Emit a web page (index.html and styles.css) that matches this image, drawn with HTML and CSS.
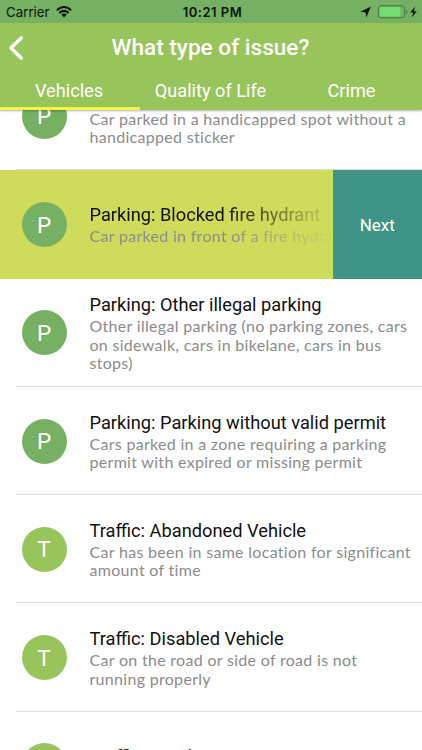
FILE: index.html
```
<!DOCTYPE html>
<html lang="en">
<head>
<meta charset="utf-8">
<title>What type of issue?</title>
<link rel="stylesheet" href="styles.css">
</head>
<body>
<div class="screen">
  <header class="header">
    <div class="status">
      <div class="status-side">
        <span class="carrier">Carrier</span>
        <svg class="wifi" width="16" height="12" viewBox="0 0 16 12"><g fill="none" stroke="#0b160a" stroke-width="2"><path d="M.9 4.2Q8-2.2 15.1 4.2"/><path d="M3.4 7Q8 2.8 12.6 7"/></g><path d="M5.3 8.6Q8 6.6 10.7 8.6L8 11.5z" fill="#0b160a"/></svg>
      </div>
      <span class="clock">10:21 PM</span>
      <div class="status-side status-end">
        <svg width="60" height="14" viewBox="0 0 60 14"><path d="M11 1.6L6.3 12.4L5.7 7.4L.4 6.8z" fill="#0b160a"/><rect x="18.5" y=".8" width="26" height="12" rx="2.5" fill="none" stroke="#42783c"/><rect x="19.7" y="2" width="20.5" height="9.6" rx="1.2" fill="#75da72"/><path d="M46 5v4q1.5-.5 1.5-2t-1.5-2z" fill="#42783c"/><path d="M55 1.6L50.3 7.6h2.9L51.8 12.6l4.9-6.4h-2.9z" fill="#0b160a"/></svg>
      </div>
    </div>
    <div class="bar">
      <svg class="back" width="14" height="24" viewBox="0 0 14 24"><path d="M12.2 2L2 12L12.2 22" fill="none" stroke="#fff" stroke-width="3.6" stroke-linecap="round" stroke-linejoin="round"/></svg>
      <h1 class="heading">What type of issue?</h1>
    </div>
    <nav class="tabs">
      <a class="tab active">Vehicles</a>
      <a class="tab">Quality of Life</a>
      <a class="tab">Crime</a>
    </nav>
  </header>
  <main class="list">
    <section class="row">
      <div class="avatar">P</div>
      <div class="body scrolled"><p class="desc"><span>Car parked in a handicapped spot without a</span><span>handicapped sticker</span></p></div>
    </section>
    <section class="row selected">
      <div class="avatar">P</div>
      <div class="body"><h2 class="title">Parking: Blocked fire hydrant</h2><p class="desc"><span>Car parked in front of a fire hydrant</span></p></div>
      <button class="next">Next</button>
    </section>
    <section class="row">
      <div class="avatar">P</div>
      <div class="body"><h2 class="title">Parking: Other illegal parking</h2><p class="desc"><span>Other illegal parking (no parking zones, cars</span><span>on sidewalk, cars in bikelane, cars in bus</span><span>stops)</span></p></div>
    </section>
    <section class="row">
      <div class="avatar">P</div>
      <div class="body"><h2 class="title">Parking: Parking without valid permit</h2><p class="desc"><span>Cars parked in a zone requiring a parking</span><span>permit with expired or missing permit</span></p></div>
    </section>
    <section class="row traffic">
      <div class="avatar">T</div>
      <div class="body"><h2 class="title">Traffic: Abandoned Vehicle</h2><p class="desc"><span>Car has been in same location for significant</span><span>amount of time</span></p></div>
    </section>
    <section class="row traffic">
      <div class="avatar">T</div>
      <div class="body"><h2 class="title">Traffic: Disabled Vehicle</h2><p class="desc"><span>Car on the road or side of road is not</span><span>running properly</span></p></div>
    </section>
    <section class="row traffic">
      <div class="avatar"></div>
      <div class="body"><h2 class="title">Traffic: Drunk Driver</h2><p class="desc line"></p></div>
    </section>
  </main>
</div>
</body>
</html>
```
FILE: styles.css
```
* { box-sizing: border-box; }
body { margin: 0; background: #fff; font-family: Roboto, sans-serif; }
h1, h2, p { margin: 0; font-weight: 400; }
.screen { width: 422px; height: 750px; overflow: hidden; display: flex; flex-direction: column; }
.header { position: relative; z-index: 2; flex: none; height: 110px; background: #98c45c; color: #fff; box-shadow: 0 1px 2px rgba(0,0,0,.3); }
.status { height: 23px; background: #76b063; color: #0b160a; display: flex; align-items: center; padding: 1px 2px 0 6px; font: 13.3px/20px Inter, sans-serif; }
.status-side { flex: 1; display: flex; align-items: center; gap: 6px; }
.status-end { justify-content: flex-end; }
.clock { font-weight: 600; font-size: 13px; letter-spacing: .5px; margin-right: 1px; }
.bar { height: 49px; display: flex; align-items: center; padding: 1px 9px 0; }
.heading { flex: 1; padding-right: 15px; text-align: center; font-size: 22.6px; line-height: 26px; font-weight: 500; }
.tabs { height: 38px; display: grid; grid-template-columns: 140px 141px 141px; }
.tab { display: flex; align-items: center; justify-content: center; padding-top: 1px; font-size: 18.2px; border-bottom: 3px solid transparent; }
.active { border-bottom-color: #f5f63e; padding-right: 2px; }
.list { flex: 1; overflow: hidden; }
.row { height: 108.25px; display: flex; align-items: center; padding-left: 21.5px; background: linear-gradient(#dedede, #dedede) 16px 100% / 100% 1px no-repeat; }
.row:first-child { height: 60.4px; }
.row:first-child .avatar { margin-top: -48px; }
.avatar { flex: none; width: 45px; height: 45px; border-radius: 50%; background: #76b063; color: #fff; display: flex; align-items: center; justify-content: center; font-size: 22.5px; font-weight: 400; }
.traffic .avatar { background: #98c45c; }
.body { flex: 1; min-width: 0; padding-left: 23px; }
.scrolled { align-self: flex-start; }
.title { font-size: 18.25px; line-height: 23px; padding-bottom: 1px; color: #111; white-space: nowrap; }
.desc { font: 400 16px/18.2px Lato, sans-serif; letter-spacing: .3px; color: #8c8c8c; white-space: nowrap; }
.line { height: 18.2px; }
.desc span { display: block; }
.selected { background: #cfdb5a; }
.selected .body { overflow: hidden; mask-image: linear-gradient(90deg, #000 60%, transparent 100%); }
.next { flex: none; width: 89.5px; height: 100%; border: 0; padding: 1px 0 0; background: #3f9485; color: #fff; font: 17px Roboto, sans-serif; }
```
